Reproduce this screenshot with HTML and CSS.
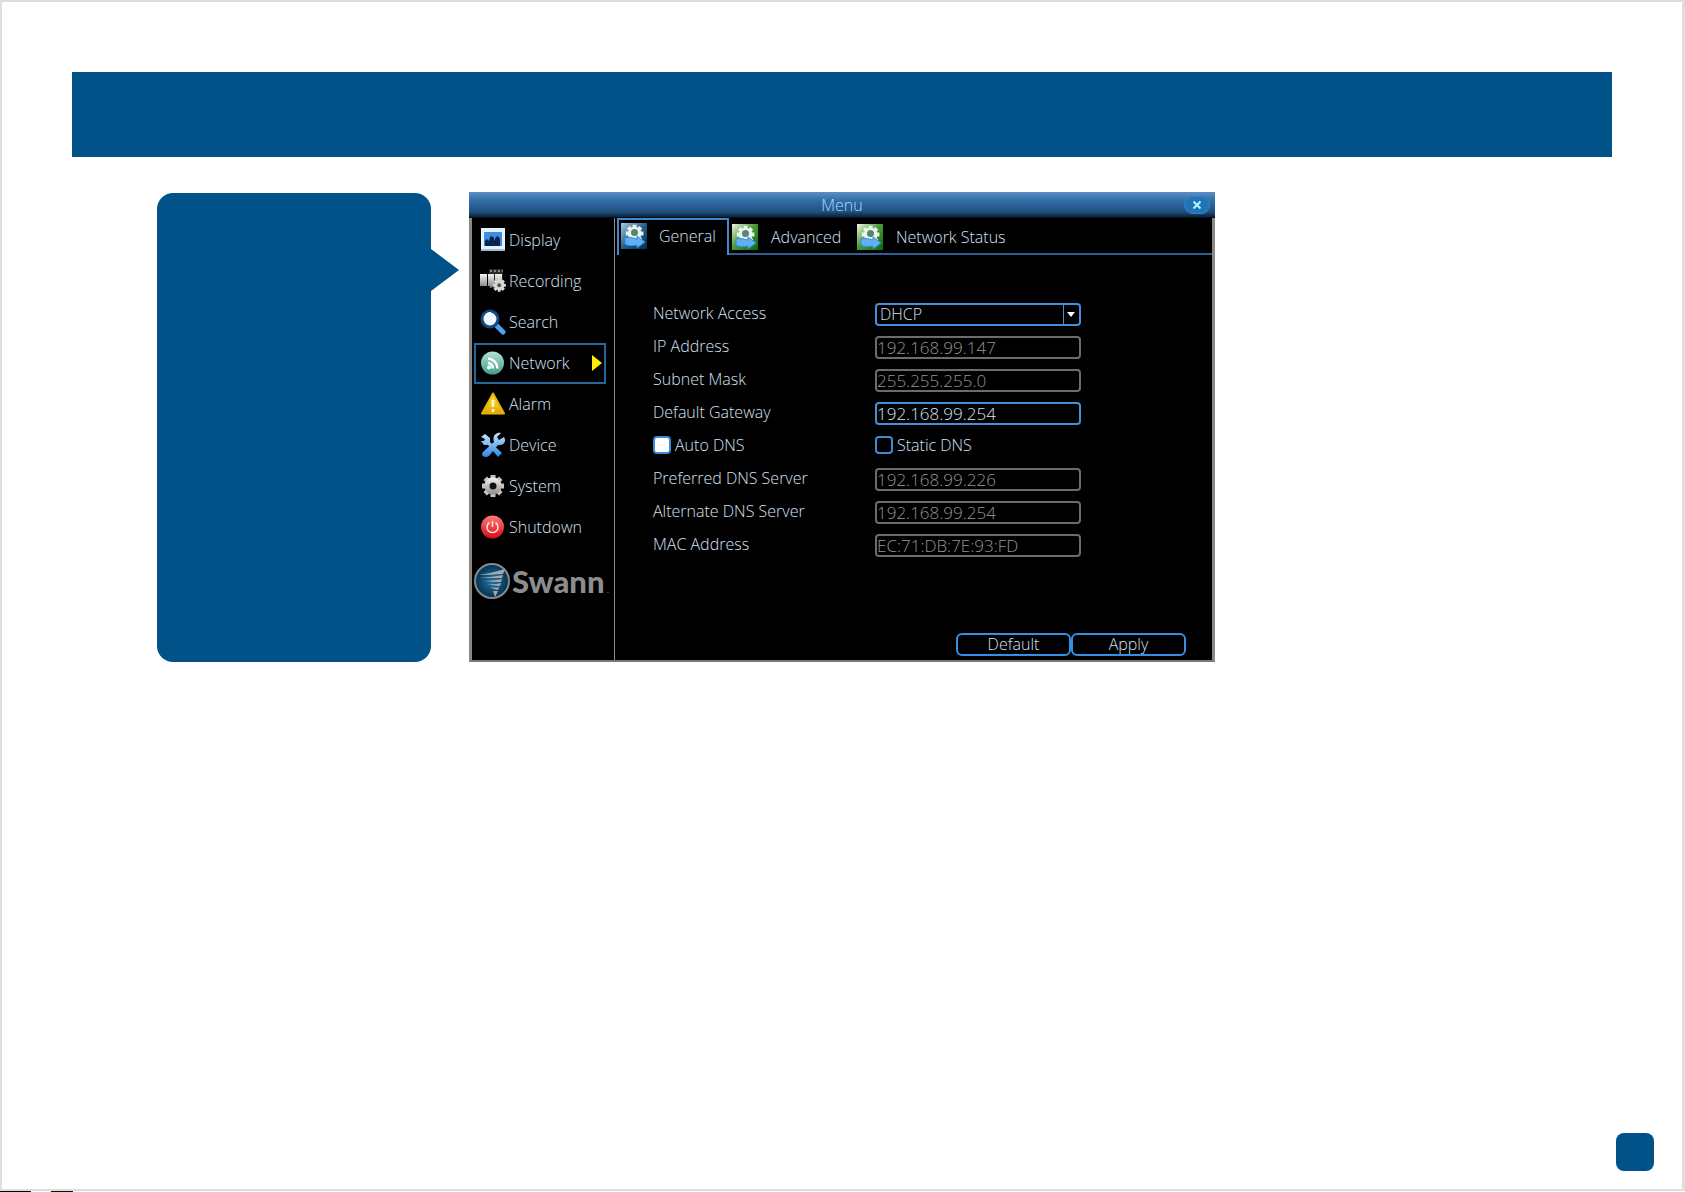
FILE: index.html
```
<!DOCTYPE html>
<html lang="en">
<head>
<meta charset="utf-8">
<title>Menu - Network</title>

<link rel="stylesheet" href="styles.css">

</head>
<body>
	<svg class="defs" aria-hidden="true">
		<defs>
			<linearGradient id="blue" x1="0" y1="0" x2="1" y2="1">
				<stop offset="0" stop-color="#a9cbe0"/>
				<stop offset=".5" stop-color="#23618c"/>
				<stop offset="1" stop-color="#022c52"/>
			</linearGradient>
			<linearGradient id="green" x1="0" y1="0" x2="1" y2="1">
				<stop offset="0" stop-color="#f0f8e4"/>
				<stop offset=".45" stop-color="#4f9c3c"/>
				<stop offset="1" stop-color="#036b08"/>
			</linearGradient>
			<linearGradient id="silver" x1="0" y1="0" x2="0" y2="1">
				<stop offset="0" stop-color="#f4f4f4"/>
				<stop offset="1" stop-color="#8c8c8c"/>
			</linearGradient>
			<linearGradient id="sky" x1="0" y1="0" x2="0" y2="1">
				<stop offset="0" stop-color="#c4e4ff"/>
				<stop offset="1" stop-color="#2b86e4"/>
			</linearGradient>
			<linearGradient id="gold" x1="0" y1="0" x2="0" y2="1">
				<stop offset="0" stop-color="#ffee58"/>
				<stop offset="1" stop-color="#e0a400"/>
			</linearGradient>
			<linearGradient id="teal" x1="0" y1="0" x2="0" y2="1">
				<stop offset="0" stop-color="#b4e2d6"/>
				<stop offset="1" stop-color="#3f9c8a"/>
			</linearGradient>
			<linearGradient id="red" x1="0" y1="0" x2="0" y2="1">
				<stop offset="0" stop-color="#ff7a7a"/>
				<stop offset="1" stop-color="#d60c14"/>
			</linearGradient>
			<radialGradient id="globe">
				<stop offset="0" stop-color="#1f76a8"/>
				<stop offset="1" stop-color="#06304f"/>
			</radialGradient>
			<g id="cog">
				<g stroke="currentColor" stroke-width="5">
					<path d="M12 1V23M1 12H23M4.200 4.200L19.800 19.800M19.800 4.200L4.200 19.800"/>
				</g>
				<circle cx="12" cy="12" r="8.500" fill="currentColor"/>
			</g>
			<g id="tab-art">
				<g color="#eef2ee" transform="translate(4 1) scale(.8)">
					<use href="#cog"/>
				</g>
				<circle cx="13.500" cy="9.500" r="3.500" fill="#4f8a6c"/>
				<path d="M4 15C7 14 11 14.500 16 16V13L24 19L16 25V22C11 23 7 23 4 21Z" fill="#5fb0f4" stroke="#3a8ad8"/>
			</g>
		</defs>
	</svg>

	<div class="page">
		<header class="banner"></header>

		<main class="content">
			<aside class="callout"></aside>

			<section class="window">
				<div class="titlebar">
					<h1>Menu</h1>
					<button class="close" type="button" aria-label="Close">
						<svg width="10" height="10" viewBox="0 0 10 10"><path d="M1.500 1.500L8.500 8.500M8.500 1.500L1.500 8.500" stroke="#b8f4ff" stroke-width="2"/></svg>
					</button>
				</div>

				<div class="window-body">
					<nav class="sidebar">
						<a class="item" href="#">
							<svg width="26" height="26" viewBox="0 0 26 26">
								<rect x="1" y="1" width="24" height="23" fill="#e6f1ff"/>
								<rect x="4" y="5" width="18" height="14" fill="#3c8fe0"/>
								<path d="M5 19V14L7 12L9 14L10 10L12 9L14 11V14L16 10L18 9L20 12V19Z" fill="#062548"/>
								<path d="M1 23H25" stroke="#9dbbe0" stroke-width="2"/>
							</svg>
							Display
						</a>
						<a class="item" href="#">
							<svg width="26" height="26" viewBox="0 0 26 26">
								<path d="M9 1H23V20H9Z" fill="#2a2a2a"/>
								<path d="M10 3H23M10 18.500H15" stroke="#888" stroke-width="2" stroke-dasharray="2 2"/>
								<path d="M0 6H7V18H0ZM8 6H14V18H8ZM15 6H22V14H15Z" fill="url(#silver)"/>
								<g color="#d8d8d8" transform="translate(12 10) scale(.6)"><use href="#cog"/></g>
								<circle cx="19.200" cy="17.200" r="2" fill="#555"/>
							</svg>
							Recording
						</a>
						<a class="item" href="#">
							<svg width="26" height="26" viewBox="0 0 26 26">
								<path d="M17 17L23 23" stroke="#4fa0ee" stroke-width="5" stroke-linecap="round"/>
								<circle cx="10" cy="10" r="8" fill="#eef7ff" stroke="#0e4a80" stroke-width="3"/>
								<path d="M5 8A6 6 0 0 1 11 4" stroke="#fff" stroke-width="2" fill="none"/>
							</svg>
							Search
						</a>
						<a class="item active" href="#">
							<svg width="26" height="26" viewBox="0 0 26 26">
								<circle cx="12.500" cy="13" r="11.500" fill="url(#teal)"/>
								<g fill="none" stroke="#fff" stroke-width="2.500">
									<path d="M8 13A6 6 0 0 1 13 18.500M8 8.500A10 10 0 0 1 17.500 18.500"/>
								</g>
								<circle cx="9" cy="17.500" r="2" fill="#fff"/>
							</svg>
							Network
							<svg class="arrow" width="10" height="16" viewBox="0 0 10 16"><path d="M0 0L10 8L0 16Z" fill="#ffee00"/></svg>
						</a>
						<a class="item" href="#">
							<svg width="26" height="26" viewBox="0 0 26 26">
								<path d="M13 2.500L24 22.500H2Z" fill="url(#gold)" stroke="#e8b400" stroke-width="2" stroke-linejoin="round"/>
								<path d="M13 9V16M13 18V21" stroke="#fff8d0" stroke-width="2.500"/>
							</svg>
							Alarm
						</a>
						<a class="item" href="#">
							<svg width="26" height="26" viewBox="0 0 26 26">
								<path d="M1 5L5 2L10 6V10L22 21L18 25L8 13L4 13L1 9L4 9L5 7Z" fill="url(#sky)"/>
								<path d="M21 1L17 5L19 8L24 5C27 10 23 14 18 13L9 24C5 27 0 23 3 20L14 10C12 4 16 0 21 1Z" fill="url(#sky)"/>
							</svg>
							Device
						</a>
						<a class="item" href="#">
							<svg width="26" height="26" viewBox="0 0 26 26">
								<g color="#c4c4c4" transform="translate(1 1)"><use href="#cog"/></g>
								<circle cx="13" cy="13" r="8.500" fill="url(#silver)"/>
								<circle cx="13" cy="13" r="3.500" fill="#111"/>
							</svg>
							System
						</a>
						<a class="item" href="#">
							<svg width="26" height="26" viewBox="0 0 26 26">
								<circle cx="12.500" cy="13" r="11.500" fill="url(#red)"/>
								<path d="M9.500 8.500A5.500 5.500 0 1 0 15.500 8.500M12.500 7V13" fill="none" stroke="#ffe4e4" stroke-width="1.500"/>
							</svg>
							Shutdown
						</a>

						<div class="logo">
							<svg width="36" height="36" viewBox="0 0 36 36">
								<circle cx="18" cy="18" r="17" fill="url(#globe)" stroke="#858a8e" stroke-width="2"/>
								<path d="M5 12Q18 10 31 6L29 11Q17 12 5 12ZM6 15Q18 14 29 12L28 15Q18 15 6 15ZM10 18Q18 18 28 16L27 19Q20 19 10 18ZM13 21Q20 22 27 20L26 23Q22 23 13 21ZM16 24Q21 25 25 24L24 27Q20 27 16 24ZM19 28L24 28L21 34Z" fill="#a4a8aa"/>
							</svg>
							<span>Swann</span><small>.</small>
						</div>
					</nav>

					<div class="panel">
						<div class="tabs" role="tablist">
							<button class="tab selected" type="button" role="tab" aria-selected="true">
								<svg width="26" height="26" viewBox="0 0 26 26"><rect width="26" height="26" fill="url(#blue)"/><use href="#tab-art"/></svg>
								General
							</button>
							<button class="tab" type="button" role="tab" aria-selected="false">
								<svg width="26" height="26" viewBox="0 0 26 26"><rect width="26" height="26" fill="url(#green)"/><use href="#tab-art"/></svg>
								Advanced
							</button>
							<button class="tab last" type="button" role="tab" aria-selected="false">
								<svg width="26" height="26" viewBox="0 0 26 26"><rect width="26" height="26" fill="url(#green)"/><use href="#tab-art"/></svg>
								Network Status
							</button>
						</div>

						<form class="form">
							<div class="row">
								<label for="access">Network Access</label>
								<div class="select">
									<select id="access">
										<option>DHCP</option>
										<option>Static</option>
										<option>PPPoE</option>
									</select>
									<svg class="caret" width="16" height="19" viewBox="0 0 16 19"><path d="M0.500 0V19" stroke="#4190d8"/><path d="M4 7H12L8 12Z" fill="#fff"/></svg>
								</div>
							</div>
							<div class="row">
								<label for="ip">IP Address</label>
								<input id="ip" class="field" type="text" value="192.168.99.147" disabled>
							</div>
							<div class="row">
								<label for="mask">Subnet Mask</label>
								<input id="mask" class="field" type="text" value="255.255.255.0" disabled>
							</div>
							<div class="row">
								<label for="gateway">Default Gateway</label>
								<input id="gateway" class="field" type="text" value="192.168.99.254">
							</div>
							<div class="row checks">
								<label><input type="checkbox" checked>Auto DNS</label>
								<label><input type="checkbox">Static DNS</label>
							</div>
							<div class="row">
								<label for="dns1">Preferred DNS Server</label>
								<input id="dns1" class="field" type="text" value="192.168.99.226" disabled>
							</div>
							<div class="row">
								<label for="dns2">Alternate DNS Server</label>
								<input id="dns2" class="field" type="text" value="192.168.99.254" disabled>
							</div>
							<div class="row">
								<label for="mac">MAC Address</label>
								<input id="mac" class="field" type="text" value="EC:71:DB:7E:93:FD" disabled>
							</div>
						</form>

						<div class="actions">
							<button type="button">Default</button>
							<button type="button">Apply</button>
						</div>
					</div>
				</div>
			</section>
		</main>

		<footer class="footer">
			<div class="page-number"></div>
		</footer>
	</div>
	<div class="strip"></div>

</body>
</html>
```
FILE: styles.css
```
* {
	box-sizing: border-box;
}

body {
	margin: 0;
	min-height: 100vh;
	display: flex;
	flex-direction: column;
	background: #fff;
	font-family: "Open Sans", "Noto Sans", sans-serif;
	font-size: 16px;
	font-weight: 300;
	line-height: 20px;
}

button, input, select {
	font: inherit;
	color: inherit;
	margin: 0;
}

svg {
	display: block;
	flex: none;
}

.defs {
	position: absolute;
	width: 0;
	height: 0;
}

.page {
	flex: 1;
	display: flex;
	flex-direction: column;
	border: 2px solid #dedede;
	border-right-width: 3px;
	padding-top: 70px;
}

.banner {
	height: 85px;
	margin: 0 70px;
	background: #005288;
}

.content {
	display: grid;
	grid-template-columns: 274px minmax(0, 746px);
	gap: 38px;
	margin: 35px 70px 0 155px;
}

/* blue speech bubble pointing at the menu */
.callout {
	position: relative;
	margin: 1px 0 0;
	border-radius: 16px;
	background: #005288;
}

.callout::after {
	content: "";
	position: absolute;
	left: 100%;
	top: 56px;
	border: 21px solid transparent;
	border-left: 28px solid #005288;
	border-right: 0;
}

.window {
	background: #000;
	color: #d6e0f4;
}

.titlebar {
	display: grid;
	grid-template-columns: 1fr auto 1fr;
	align-items: center;
	height: 26px;
	padding: 0 5px;
	background: linear-gradient(#5c8fc4, #2f6ca6 35%, #225180 75%, #0b2540 95%, #000);
}

.titlebar h1 {
	grid-column: 2;
	margin: 0;
	font-size: 16px;
	font-weight: 300;
	color: #a6dcff;
}

.close {
	justify-self: end;
	display: flex;
	align-items: center;
	justify-content: center;
	width: 26px;
	height: 18px;
	padding: 0;
	border: 1px solid #2f86cc;
	border-radius: 9px;
	background: #2272b4;
}

.window-body {
	display: flex;
	border: 3px solid #8c8884;
	border-top: 0;
	border-bottom: 2px solid #777;
}

.sidebar {
	width: 143px;
	padding: 2px 0 0 2px;
	border-right: 1px solid #8c8c8c;
}

.item {
	display: flex;
	align-items: center;
	gap: 3px;
	width: 132px;
	height: 41px;
	padding: 0 0 2px 4px;
	border: 2px solid transparent;
	color: inherit;
	text-decoration: none;
}

.item.active {
	border-color: #24689e;
}

.arrow {
	margin-left: auto;
	margin-right: 2px;
}

.logo {
	display: flex;
	align-items: center;
	gap: 2px;
	margin-top: 15px;
	color: #8b8d8f;
}

.logo span {
	font-family: Lato, "Noto Sans", sans-serif;
	font-size: 31px;
	font-weight: 900;
	line-height: 36px;
}

.logo small {
	font-size: 12px;
	align-self: flex-end;
}

.panel {
	flex: 1;
	min-width: 0;
	display: flex;
	flex-direction: column;
	padding-left: 2px;
}

.tabs {
	display: flex;
	height: 37px;
}

.tab {
	display: flex;
	align-items: center;
	gap: 13px;
	width: 125px;
	padding: 3px 3px 0;
	border: 0;
	border-bottom: 2px solid #2d5f94;
	background: none;
	white-space: nowrap;
}

.tab.selected {
	width: 112px;
	gap: 12px;
	padding: 0 2px 3px;
	border: 2px solid #3f88cc;
	border-bottom: 0;
}

.tab.last {
	flex: 1;
}

.form {
	padding: 43px 0 0 36px;
}

.row {
	display: grid;
	grid-template-columns: 222px minmax(0, 206px);
	align-items: center;
	height: 33px;
}

.row label {
	padding-bottom: 4px;
}

.field,
.select {
	height: 23px;
	border: 2px solid #4190d8;
	border-radius: 4px;
	background: #000;
}

.field {
	width: 100%;
	padding: 0;
	font-size: 17px;
}

.field:disabled {
	border-color: #6c6c6c;
	color: #949494;
}

.select {
	display: grid;
}

.select select {
	grid-area: 1 / 1;
	appearance: none;
	width: 100%;
	padding: 0 20px 0 3px;
	border: 0;
	background: none;
	line-height: 19px;
}

.caret {
	grid-area: 1 / 1;
	justify-self: end;
	pointer-events: none;
}

.checks label {
	display: flex;
	align-items: center;
	gap: 4px;
}

.checks input {
	appearance: none;
	width: 18px;
	height: 18px;
	border: 2px solid #3a8ad6;
	border-radius: 4px;
	background: #000;
}

.checks input:checked {
	background: #fff;
}

.actions {
	display: flex;
	justify-content: flex-end;
	margin-top: auto;
	padding: 71px 26px 4px 0;
}

.actions button {
	width: 115px;
	height: 23px;
	padding: 0;
	border: 2px solid #3590e4;
	border-radius: 6px;
	background: none;
	line-height: 19px;
}

.footer {
	display: flex;
	justify-content: flex-end;
	margin-top: auto;
	padding: 0 28px 18px;
}

.page-number {
	width: 38px;
	height: 38px;
	border-radius: 8px;
	background: #005288;
}

/* thin print marks along the bottom edge */
.strip {
	height: 1px;
	background: linear-gradient(90deg, #000 30px, #00f 30px, #00f 31px, #fff 31px, #fff 50px, #ff0 50px, #ff0 51px, #111 51px, #111 73px, #fff 73px);
}
```
